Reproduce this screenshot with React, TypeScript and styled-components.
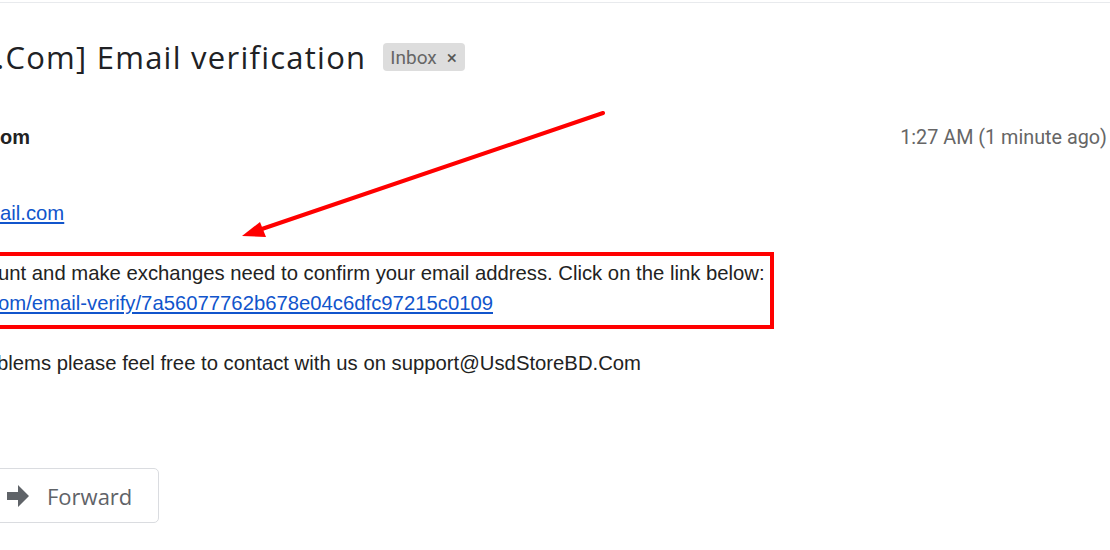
import React from "react";
import styled, { createGlobalStyle } from "styled-components";

const Global = createGlobalStyle`
  html, body { margin: 0; padding: 0; background: #fff; }
  body { overflow: hidden; width: 1110px; height: 550px; }
`;

const Page = styled.div`
  position: relative;
  width: 1110px;
  height: 550px;
  overflow: hidden;
  background: #fff;
  border-top: 2px solid #fff;
  box-sizing: border-box;
  font-family: "Liberation Sans", Arial, sans-serif;
  color: #222;
`;

const TopRule = styled.div`
  height: 1px;
  background: #e8eaed;
`;

const SubjectRow = styled.div`
  display: flex;
  align-items: center;
  gap: 17px;
  height: 28px;
  margin-top: 40px;
`;

const Subject = styled.h2`
  margin: 0;
  font-family: "Open Sans", sans-serif;
  font-weight: 400;
  font-size: 31px;
  letter-spacing: 1.25px;
  color: #202124;
  white-space: nowrap;
  text-indent: -4px;
`;

const Chip = styled.span`
  display: inline-flex;
  align-items: center;
  gap: 10px;
  height: 28px;
  padding: 0 8px 0 7px;
  border-radius: 4px;
  background: #dddddd;
  color: #666;
  font-family: Roboto, sans-serif;
  font-size: 19px;
`;

const ChipClose = styled.span`
  font-size: 19px;
  color: #555;
`;

const SenderRow = styled.div`
  display: flex;
  justify-content: space-between;
  align-items: center;
  height: 24px;
  margin-top: 54px;
  padding-right: 3px;
`;

const Sender = styled.span`
  font-family: "Liberation Sans", Arial, sans-serif;
  font-weight: 700;
  font-size: 20px;
  color: #222;
`;

const Time = styled.span`
  font-family: Roboto, sans-serif;
  font-size: 19.8px;
  color: #666;
`;

const Link = styled.a`
  color: #15c;
  text-decoration: underline;
`;

const ToLine = styled.div`
  height: 24px;
  line-height: 24px;
  margin-top: 52px;
  font-size: 20.3px;
`;

const Highlight = styled.div`
  margin-top: 27px;
  width: 774px;
  border: 4px solid #ff0000;
  border-left: none;
  padding: 2px 0 7px 0;
  box-sizing: border-box;
`;

const Line = styled.div<{ $indent?: number }>`
  font-size: 20.3px;
  line-height: 30px;
  white-space: nowrap;
  text-indent: ${(p) => p.$indent ?? 0}px;
`;

const Para = styled(Line)`
  margin-top: 19px;
`;

const ForwardButton = styled.button`
  display: flex;
  align-items: center;
  gap: 18px;
  margin-top: 90px;
  margin-left: -30px;
  height: 55px;
  padding: 0 26px 0 36px;
  background: #fff;
  border: 1px solid #dadce0;
  border-radius: 5px;
  font-family: "Open Sans", sans-serif;
  font-weight: 500;
  font-size: 22px;
  color: #5f6368;
  cursor: pointer;
`;

const Overlay = styled.svg`
  position: absolute;
  left: 0;
  top: 0;
  pointer-events: none;
`;

export default function App() {
  return (
    <Page>
      <Global />
      <TopRule />
      <SubjectRow>
        <Subject>.Com] Email verification</Subject>
        <Chip>
          Inbox<ChipClose>×</ChipClose>
        </Chip>
      </SubjectRow>
      <SenderRow>
        <Sender>om</Sender>
        <Time>1:27 AM (1 minute ago)</Time>
      </SenderRow>
      <ToLine>
        <Link href="#">ail.com</Link>
      </ToLine>
      <Highlight>
        <Line $indent={-2}>
          unt and make exchanges need to confirm your email address. Click on the link below:
        </Line>
        <Line $indent={-2}>
          <Link href="#">om/email-verify/7a56077762b678e04c6dfc97215c0109</Link>
        </Line>
      </Highlight>
      <Para $indent={-3}>blems please feel free to contact with us on support@UsdStoreBD.Com</Para>
      <ForwardButton>
        <svg width="22" height="22" viewBox="0 0 22 22">
          <path d="M0 7 H11 V0 L22 11 L11 22 V15 H0 Z" fill="#5f6368" />
        </svg>
        Forward
      </ForwardButton>
      <Overlay width="1110" height="550">
        <line x1="603" y1="111" x2="256" y2="229" stroke="#ff0000" strokeWidth="4" strokeLinecap="round" />
        <polygon points="242,234 260,220 266,235" fill="#ff0000" />
      </Overlay>
    </Page>
  );
}
